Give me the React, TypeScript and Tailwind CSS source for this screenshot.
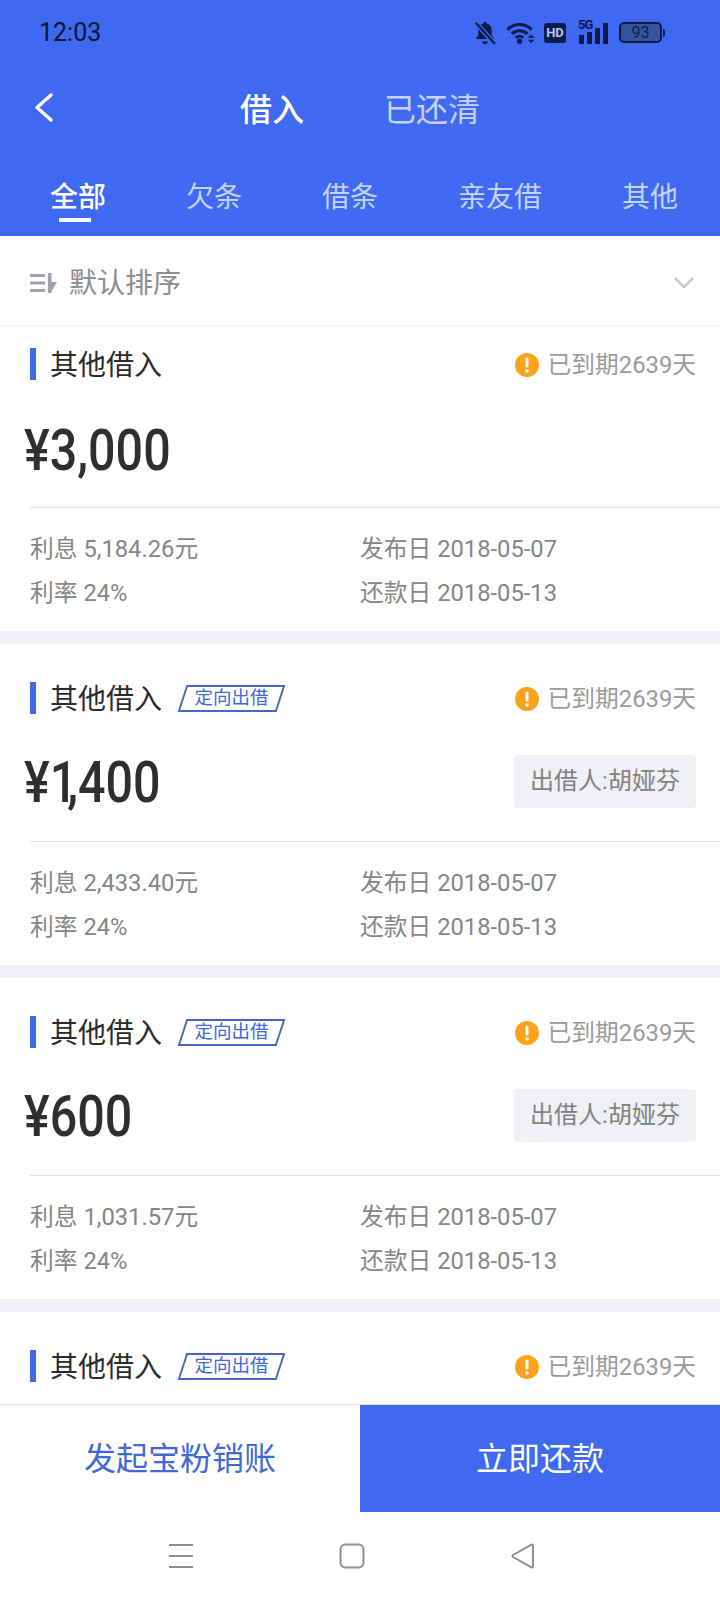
import React from "react";

const CJK = "font-['Roboto','Noto_Sans_CJK_SC',sans-serif]";

function StatusIcons() {
  return (
    <div className="flex items-center text-[#0b1b4a]">
      <svg width="24" height="26" viewBox="0 0 22 24">
        <path d="M11 1.500c1 0 1.700.7 1.700 1.700 3 .8 4.500 3.400 4.500 6.500v4.500l2.300 3.300H2.500l2.300-3.300V9.700c0-3.100 1.500-5.700 4.500-6.500C9.300 2.200 10 1.500 11 1.500z" fill="currentColor" />
        <path d="M8.500 19.500h5c0 1.600-1.100 2.800-2.500 2.800s-2.500-1.200-2.500-2.800z" fill="currentColor" />
        <path d="M2 2l18 20" stroke="#3f69f0" strokeWidth="4.500" />
        <path d="M2.500 2.500l17.500 19.500" stroke="currentColor" strokeWidth="2" />
      </svg>
      <svg width="29" height="24" viewBox="0 0 30 24" className="ml-[9px]">
        <path d="M1.500 8.500C8.500 1.500 19.500 1.500 26.500 8.500" stroke="currentColor" strokeWidth="3.200" fill="none" />
        <path d="M6 13c4.500-4.500 11.500-4.500 16 0" stroke="currentColor" strokeWidth="3.200" fill="none" />
        <path d="M10 17c2.500-2.300 5.500-2.300 8 0" stroke="currentColor" strokeWidth="2.800" fill="none" />
        <circle cx="14" cy="20.500" r="2.700" fill="currentColor" />
        <path d="M22.500 17l3.500-3.500 3.500 3.500zM22.500 19h7l-3.500 3.500z" fill="currentColor" />
      </svg>
      <div className="ml-[9px] flex h-[20px] w-[22px] items-center justify-center rounded-[3px] bg-[#0b1b4a] font-['Roboto',sans-serif] text-[13px] font-bold leading-none text-[#b9c8fa]">
        HD
      </div>
      <div className="relative ml-[12px] h-[22px] w-[31px]">
        <span className="absolute left-0 top-[-4px] font-['Roboto',sans-serif] text-[13px] font-bold leading-none tracking-[-1px]">5G</span>
        <svg width="31" height="22" viewBox="0 0 31 22" className="absolute left-0 top-0">
          <rect x="1" y="13" width="5" height="9" fill="currentColor" />
          <rect x="9" y="10" width="5" height="12" fill="currentColor" />
          <rect x="17" y="6" width="5" height="16" fill="currentColor" />
          <rect x="25" y="1" width="5" height="21" fill="currentColor" />
        </svg>
      </div>
      <div className="ml-[10px] flex h-[21px] w-[43px] items-center justify-center rounded-[5px] border-2 border-[#0b1b4a] bg-[#35559f] font-['Roboto',sans-serif] text-[16px] leading-none text-[#0b1b4a]">
        93
      </div>
      <div className="ml-[1px] h-[8px] w-[2px] rounded-r bg-[#0b1b4a]" />
    </div>
  );
}

function Tag() {
  return (
    <div className="relative ml-[20px] flex h-[27px] w-[99px] items-center justify-center">
      <div className="absolute inset-0 -skew-x-[18deg] border-2 border-[#4469c4]" />
      <span className="relative mt-[1px] text-[18.500px] leading-none text-[#3f69d8]">定向出借</span>
    </div>
  );
}

function Overdue() {
  return (
    <div className="mt-[1px] flex items-center">
      <svg width="24" height="24" viewBox="0 0 24 24">
        <circle cx="12" cy="12" r="12" fill="#fca31d" />
        <rect x="10.500" y="4.500" width="3" height="10" rx="1.500" fill="#fff" />
        <circle cx="12" cy="18" r="1.800" fill="#fff" />
      </svg>
      <span className="ml-[9px] mt-[2px] text-[23.750px] leading-none text-[#9a9a9a]">已到期2639天</span>
    </div>
  );
}

function Title({ tag }: { tag?: boolean }) {
  return (
    <div className="flex h-[32px] items-center pl-[30px] pr-[24px]">
      <div className="h-[32px] w-[6px] bg-[#3f69f0]" />
      <span className="ml-[14px] mt-[3px] text-[28px] leading-none text-[#2b2b2b]">其他借入</span>
      {tag && <Tag />}
      <div className="ml-auto">
        <Overdue />
      </div>
    </div>
  );
}

function Card({ amount, interest, lender, first }: { amount: React.ReactNode; interest: string; lender?: boolean; first?: boolean }) {
  return (
    <div className={`bg-white ${first ? "pt-[22px] pb-[23px]" : "pt-[38px] pb-[23px]"}`}>
      <Title tag={lender} />
      <div className={`${first ? "mt-[34px]" : "mt-[32px]"} flex h-[70px] items-center pr-[24px]`}>
        <span className="ml-[24px] mt-[2px] inline-block origin-left scale-x-[0.835] font-['Roboto',sans-serif] text-[58px] font-medium leading-none text-[#2f2f2f]">
          {amount}
        </span>
        {lender && (
          <div className="ml-auto flex h-[53px] w-[182px] items-center justify-center rounded-[4px] bg-[#f0f1f4] text-[24px] leading-none text-[#808080]">
            出借人:胡娅芬
          </div>
        )}
      </div>
      <div className={`ml-[30px] ${first ? "mt-[23px]" : "mt-[25px]"} border-t border-[#e3e3e3]`} />
      <div className="ml-[30px] mt-[26px] grid grid-cols-[330px_1fr] gap-y-[14px] text-[23.750px] leading-[30px] text-[#858585]">
        <div>利息 {interest}元</div>
        <div>发布日 2018-05-07</div>
        <div>利率 24%</div>
        <div>还款日 2018-05-13</div>
      </div>
    </div>
  );
}

export default function App() {
  const tabs = ["全部", "欠条", "借条", "亲友借", "其他"];
  return (
    <div className={`flex h-[1600px] w-[720px] flex-col overflow-hidden bg-white ${CJK}`}>
      <header className="h-[236px] shrink-0 bg-[#3f69f0]">
        <div className="flex h-[64px] items-center pl-[39px] pr-[55px] pt-[1px]">
          <span className="font-['Roboto',sans-serif] text-[25px] leading-none text-[#0b1533]">12:03</span>
          <div className="ml-auto">
            <StatusIcons />
          </div>
        </div>
        <div className="relative flex h-[92px] items-center">
          <svg width="22" height="32" viewBox="0 0 22 32" className="absolute left-[33px] top-[28px]">
            <path d="M18 3L4 15.500 18 28" stroke="#fff" strokeWidth="3.500" fill="none" strokeLinecap="round" strokeLinejoin="round" />
          </svg>
          <span className="ml-[240px] text-[32px] font-medium leading-none text-white">借入</span>
          <span className="ml-[80px] text-[32px] leading-none text-[#c6d3fb]">已还清</span>
        </div>
        <div className="mt-[22px] flex justify-between pl-[50px] pr-[42px]">
          {tabs.map((t, i) => (
            <div key={t} className="relative">
              <span className={`block text-[28px] leading-[40px] ${i === 0 ? "font-medium text-white" : "text-[#c6d3fb]"}`}>{t}</span>
              {i === 0 && <div className="absolute left-[9px] top-[40px] h-[4px] w-[32px] bg-white" />}
            </div>
          ))}
        </div>
      </header>

      <div className="flex h-[90px] shrink-0 items-center border-b border-[#eeeeee] pl-[30px] pr-[26px] pt-[4px]">
        <svg width="27" height="22" viewBox="0 0 27 22">
          <g fill="#a0a3ad">
            <rect x="0" y="2" width="15" height="3" />
            <rect x="0" y="9.500" width="15" height="3" />
            <rect x="0" y="17" width="15" height="3" />
            <rect x="18" y="1" width="3.500" height="20" />
            <path d="M21 10h6l-6 10z" />
          </g>
        </svg>
        <span className="ml-[12px] mt-[3px] text-[28px] leading-none text-[#8c8c8c]">默认排序</span>
        <svg width="20" height="12" viewBox="0 0 20 12" className="ml-auto">
          <path d="M1 1l9 9 9-9" stroke="#c8c8c8" strokeWidth="2.500" fill="none" />
        </svg>
      </div>

      <div className="flex min-h-0 flex-1 flex-col gap-[13px] overflow-hidden bg-[#f0f1f4]">
        <Card first amount="¥3,000" interest="5,184.26" />
        <Card lender amount={<>¥<span className="tracking-[-12px]">1</span>,400</>} interest="2,433.40" />
        <Card lender amount="¥600" interest="1,031.57" />
        <div className="flex-1 bg-white pt-[38px]">
          <Title tag />
        </div>
      </div>

      <div className="flex h-[108px] shrink-0 border-t border-[#e3e3e3] bg-white">
        <div className="flex w-[360px] items-center justify-center text-[32px] leading-none text-[#3f69d8]">发起宝粉销账</div>
        <div className="flex w-[360px] items-center justify-center bg-[#3f69f0] text-[32px] leading-none text-white">立即还款</div>
      </div>

      <div className="flex h-[88px] shrink-0 items-center justify-center gap-[145px] bg-white pr-[16px]">
        <svg width="26" height="26" viewBox="0 0 26 26">
          <path d="M1 2h24M1 13h24M1 24h24" stroke="#8e8e8e" strokeWidth="2" />
        </svg>
        <svg width="26" height="26" viewBox="0 0 26 26">
          <rect x="1.500" y="1.500" width="23" height="23" rx="5" stroke="#8e8e8e" strokeWidth="2" fill="none" />
        </svg>
        <svg width="26" height="26" viewBox="0 0 26 26">
          <path d="M23 2.500v21a1 1 0 0 1-1.500.8L3 14a1.200 1.200 0 0 1 0-2L21.500 1.700a1 1 0 0 1 1.500.8z" stroke="#8e8e8e" strokeWidth="2" fill="none" />
        </svg>
      </div>
    </div>
  );
}
